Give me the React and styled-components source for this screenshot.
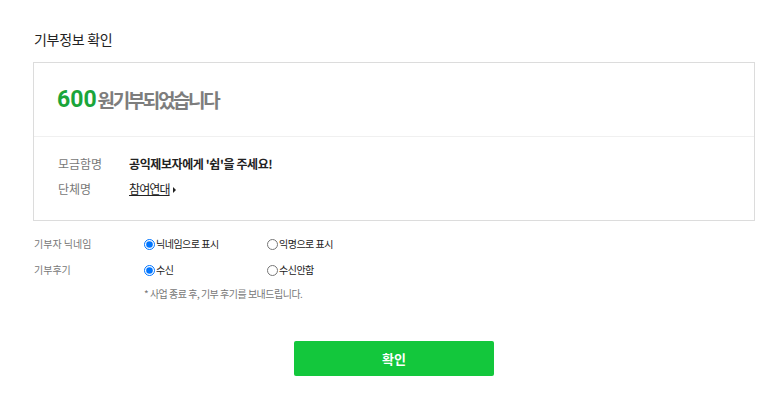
import React from 'react';
import styled, { createGlobalStyle } from 'styled-components';

const GlobalStyle = createGlobalStyle`
  body {
    margin: 0;
    background: #fff;
    font-family: 'Noto Sans CJK KR', 'Noto Sans', sans-serif;
    color: #222;
  }
`;

const Page = styled.div`
  width: 722px;
  padding: 30px 0 0 33px;
`;

const Heading = styled.h2`
  margin: 0 0 13px 1px;
  font-size: 14px;
  font-weight: 400;
  line-height: 19px;
  color: #222;
  letter-spacing: -0.3px;
`;

const Box = styled.div`
  border: 1px solid #dcdcdc;
`;

const BoxHead = styled.div`
  height: 73px;
  display: flex;
  align-items: center;
  padding-left: 23px;
  border-bottom: 1px solid #f0f0f0;
`;

const Amount = styled.strong`
  font-family: 'Roboto', 'Noto Sans', sans-serif;
  font-size: 23px;
  font-weight: 700;
  color: #1aa53a;
`;

const AmountText = styled.span`
  font-size: 19px;
  font-weight: 700;
  color: #7d7d7d;
  letter-spacing: -2.4px;
  margin-left: 1px;
`;

const InfoList = styled.dl`
  margin: 0;
  padding: 18px 0 22px 24px;
  display: grid;
  grid-template-columns: 71px 1fr;
  row-gap: 7px;
`;

const Term = styled.dt`
  font-size: 12px;
  line-height: 18px;
  color: #777;
`;

const Desc = styled.dd`
  margin: 0;
  font-size: 12px;
  line-height: 18px;
  color: #222;
  font-weight: ${(p) => (p.bold ? 700 : 400)};
  letter-spacing: -0.4px;
`;

const OrgLink = styled.a`
  color: #222;
  text-decoration: underline;
  letter-spacing: -0.9px;
`;

const Arrow = styled.span`
  display: inline-block;
  margin-left: 3px;
  width: 0;
  height: 0;
  border-top: 3px solid transparent;
  border-bottom: 3px solid transparent;
  border-left: 3px solid #222;
  vertical-align: 1px;
`;

const Options = styled.div`
  padding-top: 15px;
  display: grid;
  grid-template-columns: 108px 123px 1fr;
  row-gap: 10px;
  align-items: center;
`;

const OptLabel = styled.span`
  font-size: 10px;
  color: #777;
  padding-left: 1px;
  line-height: 16px;
`;

const RadioLabel = styled.label`
  display: flex;
  align-items: center;
  font-size: 10px;
  color: #222;
  line-height: 16px;
  letter-spacing: -0.5px;
`;

const Radio = styled.input`
  width: 11px;
  height: 11px;
  margin: 0 1px 0 3px;
`;

const Note = styled.p`
  grid-column: 2 / 4;
  margin: -1px 0 0 3px;
  font-size: 10px;
  color: #777;
  line-height: 14px;
  letter-spacing: -0.5px;
`;

const ButtonRow = styled.div`
  display: flex;
  justify-content: center;
  padding-top: 40px;
`;

const Confirm = styled.button`
  width: 200px;
  height: 35px;
  border: 0;
  border-radius: 2px;
  background: #13c73c;
  color: #fff;
  font-family: inherit;
  font-size: 13px;
  font-weight: 700;
`;

export default function App() {
  return (
    <>
      <GlobalStyle />
      <Page>
        <Heading>기부정보 확인</Heading>
        <Box>
          <BoxHead>
            <Amount>600</Amount>
            <AmountText>원기부되었습니다</AmountText>
          </BoxHead>
          <InfoList>
            <Term>모금함명</Term>
            <Desc bold>공익제보자에게 '쉼'을 주세요!</Desc>
            <Term>단체명</Term>
            <Desc>
              <OrgLink href="#">참여연대</OrgLink>
              <Arrow />
            </Desc>
          </InfoList>
        </Box>
        <Options>
          <OptLabel>기부자 닉네임</OptLabel>
          <RadioLabel>
            <Radio type="radio" name="nick" defaultChecked />
            닉네임으로 표시
          </RadioLabel>
          <RadioLabel>
            <Radio type="radio" name="nick" />
            익명으로 표시
          </RadioLabel>
          <OptLabel>기부후기</OptLabel>
          <RadioLabel>
            <Radio type="radio" name="review" defaultChecked />
            수신
          </RadioLabel>
          <RadioLabel>
            <Radio type="radio" name="review" />
            수신안함
          </RadioLabel>
          <Note>* 사업 종료 후, 기부 후기를 보내드립니다.</Note>
        </Options>
        <ButtonRow>
          <Confirm type="button">확인</Confirm>
        </ButtonRow>
      </Page>
    </>
  );
}
